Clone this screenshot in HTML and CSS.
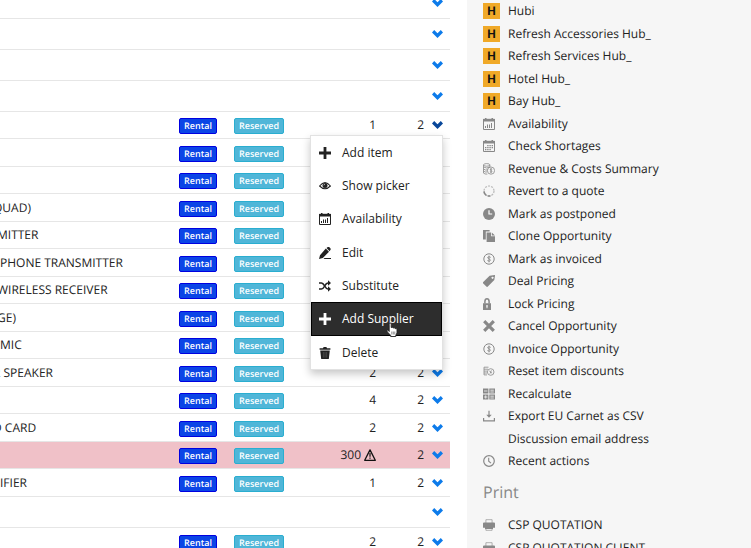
FILE: index.html
```html
<!DOCTYPE html>
<html lang="en">
<head>
<meta charset="utf-8">
<title>Opportunity</title>
<link rel="stylesheet" href="styles.css">
<script src="app.js" defer></script>
</head>
<body>
<svg class="sprite" aria-hidden="true">
  <symbol id="chevron" viewBox="0 0 11 8"><path d="M0 2.500 2.200 0 5.500 3.200 8.800 0 11 2.500 5.500 8Z" fill="currentColor"/></symbol>
  <symbol id="plus" viewBox="0 0 12 12"><path d="M6 0v12M0 6h12" stroke="currentColor" stroke-width="2.8"/></symbol>
  <symbol id="eye" viewBox="0 0 12 12"><path d="M.6 6Q6-.8 11.4 6 6 11.4.6 6Z" fill="none" stroke="currentColor" stroke-width="1.1"/><circle cx="6" cy="5.6" r="2.5" fill="currentColor"/><path d="M4.9 5.3q0-1 1-1.1" stroke="#fff" stroke-width=".7" fill="none"/></symbol>
  <symbol id="calendar" viewBox="0 0 12 12"><path d="M.5 1.3h11v10.2H.5Z" fill="none" stroke="currentColor"/><path d="M0 1h12v2.6H0ZM2 0h1.5v2H2ZM8.5 0H10v2H8.5Z" fill="currentColor"/><path d="M2.500 8v2M4.500 6.500V10M6.500 6.500V10M8.500 5V10" stroke="currentColor"/></symbol>
  <symbol id="shortage" viewBox="0 0 12 12"><path d="M.5 1.3h11v10.2H.5Z" fill="none" stroke="currentColor"/><path d="M0 1h12v2.6H0ZM2 0h1.5v2H2ZM8.5 0H10v2H8.5Z" fill="currentColor"/><path d="M4.2 5.6H10M2 7.6h8M2 9.6h6" stroke="currentColor" stroke-width="1.2" stroke-dasharray="1.4 .8"/></symbol>
  <symbol id="pencil" viewBox="0 0 12 12"><path d="M0 12 1 8.200 6.800 1.600l3.200 3.200L3.800 11ZM7.500 1 8.800 0q.9-.4 1.600.2l1.100 1.200q.6.700 0 1.400L10.600 4.200ZM5.500 11H12v1H4.5Z" fill="currentColor"/></symbol>
  <symbol id="shuffle" viewBox="0 0 12 12"><path d="M0 3h2.5c3 0 3.2 6 6.5 6h1M0 9h2.5C5.5 9 5.7 3 9 3h1" fill="none" stroke="currentColor" stroke-width="1.5"/><path d="M9 .2 12 3 9 5.800ZM9 6.200 12 9 9 11.800Z" fill="currentColor"/></symbol>
  <symbol id="trash" viewBox="0 0 12 12"><path d="M.6 1.200h3.400L4.600 0h2.800L8 1.200h3.400v1.600H.6ZM1.200 3.600h9.600L9.800 12H2.200Z" fill="currentColor"/><path d="M4.3 5v5.6M6 5v5.6M7.7 5v5.6" stroke="#fff" stroke-opacity=".35" stroke-width=".5"/></symbol>
  <symbol id="costs" viewBox="0 0 12 12"><g fill="none" stroke="currentColor" stroke-width=".8"><ellipse cx="3.7" cy="1.9" rx="3.2" ry="1.3"/><path d="M.5 1.9v8.2q1.2 1.2 3.8 1M.5 4q3 2 6.4 0V1.9M.5 6q2 1.6 4.3.9M.5 8.1q2 1.4 3.6.8"/><circle cx="8" cy="7.6" r="3.6"/><path d="M9.2 6.3q-1.1-.8-2 0c-.7.9 2 1.3 1.9 2.2q-.6 1.1-2.2.3M8 5.1v5"/></g></symbol>
  <symbol id="reset" viewBox="0 0 12 12"><g fill="none" stroke="currentColor" stroke-width=".8"><path d="M5.5 2.2H1v7.7h3M1 4.2h4M1 6.1h3M1 8h3"/><circle cx="7.7" cy="7" r="3.3"/><path d="m6.3 6 2.8 2.2M8.4 5.4 7 8.6"/></g></symbol>
  <symbol id="dashed" viewBox="0 0 12 12"><circle cx="6" cy="6" r="5" fill="none" stroke="currentColor" stroke-opacity=".55" stroke-width="1.2" stroke-dasharray="2 1.14"/><path d="M1 6.4q.2 3 2.3 4M4.6 11h2.8" fill="none" stroke="currentColor" stroke-width="1.6"/></symbol>
  <symbol id="clock-solid" viewBox="0 0 12 12"><circle cx="6" cy="6" r="6" fill="currentColor"/><path d="M6 2.3V6h3.2" fill="none" stroke="#fff" stroke-width="1.2"/></symbol>
  <symbol id="clone" viewBox="0 0 12 12"><path d="M0 0h6.6v1.6H2.8v8H0ZM3.6 2.4H8V6.2h4V12H3.6ZM8.8 2.4 12 5.4H8.8Z" fill="currentColor"/></symbol>
  <symbol id="coin" viewBox="0 0 12 12"><g fill="none" stroke="currentColor"><circle cx="6" cy="6" r="5.2"/><path d="M7.7 4.4q-1.6-1.2-2.9-.2c-1 1.4 2.8 1.8 2.7 3.1q-.7 1.5-3.1.3M6 2.6v6.8" stroke-width=".9"/></g></symbol>
  <symbol id="tag" viewBox="0 0 12 12"><path fill-rule="evenodd" d="M0 7.3 6.6.8 11.7 0Q12.2 0 12 .7L11.3 5 4.6 11.8q-.5.3-1 0L0 8.3ZM9.5 1.7a1 1 0 1 0 .1 0Z" fill="currentColor"/></symbol>
  <symbol id="lock" viewBox="0 0 12 12"><path d="M1.9 5.5V3.4q.2-2.6 2.1-2.6t2.1 2.6v2.1" fill="none" stroke="currentColor" stroke-width="1.5"/><path fill-rule="evenodd" d="M0 5.2h8V12H0ZM4 7a1 1 0 0 0-.5 1.8v1.4h1V8.8A1 1 0 0 0 4 7Z" fill="currentColor"/></symbol>
  <symbol id="cross" viewBox="0 0 12 12"><path d="m1.2 1.2 9.6 9.6m0-9.6-9.6 9.6" stroke="currentColor" stroke-width="3.2"/></symbol>
  <symbol id="calc" viewBox="0 0 12 12"><path d="M0 .5h5.4v5H0ZM6.3.5H12v5H6.3ZM0 6.5h5.4v5H0ZM6.3 6.5H12v5H6.3Z" fill="currentColor"/><path d="M1 3h3.4M7.4 2.2h3.4M7.4 4h3.4M1 9h3.4M2.7 7.4v3.2M7.4 8.2h3.4M7.4 10h3.4" stroke="#f6f6f6" stroke-width=".8"/></symbol>
  <symbol id="download" viewBox="0 0 12 12"><path d="M.6 8v2.9h10.8V8M6 .8v5" fill="none" stroke="currentColor" stroke-width="1.2"/><path d="M3.3 4.7h5.4L6 7.8Z" fill="currentColor"/></symbol>
  <symbol id="clock" viewBox="0 0 12 12"><circle cx="6" cy="6" r="5.3" fill="none" stroke="currentColor" stroke-width="1.2"/><path d="M5.7 2.8v3.4L8 8.2" fill="none" stroke="currentColor" stroke-width="1.1"/></symbol>
  <symbol id="printer" viewBox="0 0 12 12"><path d="M2.9 4V.7h6.2V4M2.9 8.3v3h6.2v-3" fill="none" stroke="currentColor" stroke-opacity=".7" stroke-width=".9"/><path d="M1 3.6h10q1 0 1 1v4.2h-2V7.6H2v1.2H0V4.6q0-1 1-1ZM2 7h8v3H2Z" fill="currentColor"/></symbol>
  <symbol id="warning" viewBox="0 0 12 12"><path d="M6 .9 11.300 11.300H.7Z" fill="none" stroke="currentColor" stroke-width="1.3" stroke-linejoin="round"/><path d="M6 4v3.8M6 8.6v1.2" stroke="currentColor" stroke-width="1.2"/></symbol>
</svg>
<div class="layout">
  <main class="items">
    <table class="items-table">
      <colgroup><col><col class="col-type"><col class="col-status"><col class="col-qty"><col class="col-days"><col class="col-action"></colgroup>
      <tbody id="rows"></tbody>
    </table>
  </main>
  <aside class="sidebar">
    <ul class="actions" id="actions"></ul>
    <h2>Print</h2>
    <ul class="actions" id="prints"></ul>
  </aside>
</div>
<template id="menu-template">
  <ul class="menu">
    <li><button type="button"><svg><use href="#plus"/></svg>Add item</button></li>
    <li><button type="button"><svg><use href="#eye"/></svg>Show picker</button></li>
    <li><button type="button"><svg><use href="#calendar"/></svg>Availability</button></li>
    <li><button type="button"><svg><use href="#pencil"/></svg>Edit</button></li>
    <li><button type="button"><svg><use href="#shuffle"/></svg>Substitute</button></li>
    <li><button type="button" class="active"><svg><use href="#plus"/></svg>Add Supplier
      <svg class="pointer" viewBox="0 0 12 15"><path d="M3.2 9V1.6q.1-1 1-1t1 1V5q1.700-.7 2 .5 1.500-.6 1.900.6 1.800-.3 1.900 1v3.400l-1.200 2.200V14H4.600v-1.200L1.400 9.500Q.3 8.100 1.300 7.500q.8-.3 1.900 1.500Z" fill="#fff" stroke="#222" stroke-width=".9"/><path d="M5.800 9v3M7.300 9v3M8.800 9v3" stroke="#444" stroke-width=".6"/></svg></button></li>
    <li><button type="button"><svg><use href="#trash"/></svg>Delete</button></li>
  </ul>
</template>
</body>
</html>
```
FILE: styles.css
```css
* { box-sizing: border-box; }
body { margin: 0; overflow: hidden; background: #fff; color: #222; font: 12px/16px "Open Sans", "Noto Sans", sans-serif; text-rendering: geometricPrecision; }
button { font: inherit; color: inherit; border: 0; margin: 0; background: none; }
ul { list-style: none; margin: 0; padding: 0; }
.sprite { position: absolute; width: 0; height: 0; }
.layout { display: grid; grid-template-columns: minmax(0, 1fr) 284px; height: 100vh; }

.items { padding-right: 17px; margin-top: -12px; }
.items-table { width: 100%; table-layout: fixed; border-collapse: separate; border-spacing: 0; }
.col-type { width: 55px; }
.col-status { width: 60px; }
.col-qty { width: 82px; }
.col-days { width: 48px; }
.col-action { width: 26px; }
.items-table td { height: 27px; padding: 0; border-bottom: 1px solid #e6e6e6; vertical-align: middle; white-space: nowrap; }
.items-table tr:nth-child(even) td { height: 28px; }
.items-table tr.group:nth-child(n) td { height: 31px; }
.items-table .short td { background: #f0c1c8; }
.items-table .number { text-align: right; }
.number svg { width: 12px; height: 12px; margin-left: 3px; vertical-align: -2px; color: #111; }
.name { overflow: hidden; }
.edge { text-indent: -3px; }
.clipped { text-indent: -7px; }
.badge { display: block; width: max-content; margin-top: 2px; padding: 0 4px; border: 1px solid #2aaed0; border-radius: 2px; background: #50b6d8; color: #fff; font-size: 9px; line-height: 14px; font-weight: 600; }
.badge.rental { background: #0b45e6; border-color: #0000e0; }
.action { position: relative; }
.toggle { display: block; padding: 0; margin-left: 8px; color: #0d7bea; }
.toggle svg { display: block; width: 11px; height: 8px; }
.open .toggle { color: #08479a; }

.menu { position: absolute; z-index: 1; top: 23px; right: 7px; width: 133px; border: 1px solid #e2e2e2; background: #fff; box-shadow: 0 4px 8px rgba(0, 0, 0, .22); }
.menu li { height: 33px; }
.menu li:nth-child(3n) { height: 34px; }
.menu button { position: relative; display: flex; align-items: center; gap: 11px; width: 100%; height: 100%; padding: 0 8px; }
.menu button > svg:first-child { width: 12px; height: 12px; }
.menu .active { background: #2d2d2d; border: 1px solid #000; padding: 0 7px; color: #fff; font-weight: 500; }
.menu .pointer { position: absolute; left: 74px; top: 19px; width: 12px; height: 16px; }

.sidebar { padding: 0 16px; background: #f6f6f6; overflow: hidden; }
.actions li { height: 22px; }
.actions li:nth-child(even) { height: 23px; }
.actions a { display: flex; align-items: center; height: 100%; color: inherit; text-decoration: none; white-space: nowrap; }
.icon { display: flex; width: 25px; color: #888; }
.icon svg { width: 12px; height: 12px; }
.hub { width: 17px; height: 16px; background: #f0a928; color: #111; font: 700 12px/17px "Liberation Sans Narrow", "Roboto", sans-serif; text-align: center; }
.sidebar h2 { margin: 9px 0 11px; color: #888; font-size: 16px; line-height: 22px; font-weight: 400; }
```
FILE: app.js
```javascript
const rows = [
  { group: true }, { group: true }, { group: true }, { group: true },
  { name: "", qty: 1, days: 2, open: true },
  { name: "" },
  { name: "" },
  { name: "QUAD)", offset: "clipped" },
  { name: "MITTER", offset: "edge" },
  { name: "PHONE TRANSMITTER" },
  { name: "WIRELESS RECEIVER", offset: "edge" },
  { name: "GE)", offset: "edge" },
  { name: "MIC" },
  { name: "R SPEAKER", qty: 2, days: 2, offset: "clipped" },
  { name: "", qty: 4, days: 2 },
  { name: "D CARD", qty: 2, days: 2, offset: "clipped" },
  { name: "", qty: 300, days: 2, short: true },
  { name: "IFIER", qty: 1, days: 2 },
  { group: true },
  { name: "", qty: 2, days: 2 }
];
const icon = (id) => `<svg aria-hidden="true"><use href="#${id}"/></svg>`;
const menu = document.getElementById("menu-template").innerHTML;
const toggle = `<button type="button" class="toggle" aria-label="Item actions">${icon("chevron")}</button>`;
document.getElementById("rows").innerHTML = rows.map((r) => r.group
  ? `<tr class="group"><td colspan="5"></td><td class="action">${toggle}</td></tr>`
  : `<tr class="${r.short ? "short" : ""} ${r.open ? "open" : ""}">
      <td class="name ${r.offset || ""}">${r.name}</td>
      <td><span class="badge rental">Rental</span></td>
      <td><span class="badge">Reserved</span></td>
      <td class="number">${r.qty || ""}${r.short ? icon("warning") : ""}</td>
      <td class="number">${r.days || ""}</td>
      <td class="action">${toggle}${r.open ? menu : ""}</td>
    </tr>`).join("");

const hub = `<span class="hub">H</span>`;
const item = ([id, label]) =>
  `<li><a href="#"><span class="icon">${id === "hub" ? hub : id ? icon(id) : ""}</span>${label}</a></li>`;
document.getElementById("actions").innerHTML = [
  ["hub", "Hubi"],
  ["hub", "Refresh Accessories Hub_"],
  ["hub", "Refresh Services Hub_"],
  ["hub", "Hotel Hub_"],
  ["hub", "Bay Hub_"],
  ["calendar", "Availability"],
  ["shortage", "Check Shortages"],
  ["costs", "Revenue &amp; Costs Summary"],
  ["dashed", "Revert to a quote"],
  ["clock-solid", "Mark as postponed"],
  ["clone", "Clone Opportunity"],
  ["coin", "Mark as invoiced"],
  ["tag", "Deal Pricing"],
  ["lock", "Lock Pricing"],
  ["cross", "Cancel Opportunity"],
  ["coin", "Invoice Opportunity"],
  ["reset", "Reset item discounts"],
  ["calc", "Recalculate"],
  ["download", "Export EU Carnet as CSV"],
  ["", "Discussion email address"],
  ["clock", "Recent actions"]
].map(item).join("");
document.getElementById("prints").innerHTML = [
  ["printer", "CSP QUOTATION"],
  ["printer", "CSP QUOTATION CLIENT"]
].map(item).join("");
```
